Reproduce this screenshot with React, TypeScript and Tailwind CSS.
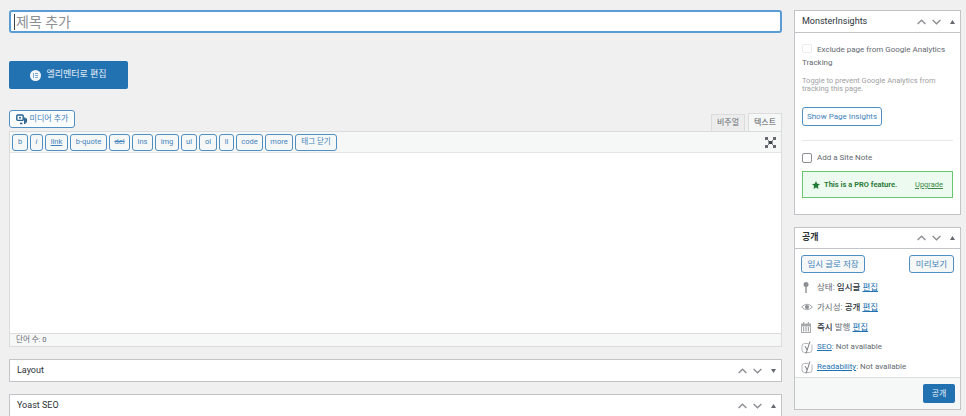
import { ReactNode } from 'react'

const font = "font-['Roboto','Noto_Sans_CJK_KR',sans-serif]"

// widths read off the editor toolbar
const quicktags = [
  { label: 'b', width: 'w-[16px]' },
  { label: 'i', width: 'w-[13px] italic' },
  { label: 'link', width: 'w-[23px] underline' },
  { label: 'b-quote', width: 'w-[37px]' },
  { label: 'del', width: 'w-[21px] line-through' },
  { label: 'ins', width: 'w-[21px]' },
  { label: 'img', width: 'w-[24px]' },
  { label: 'ul', width: 'w-[16px]' },
  { label: 'ol', width: 'w-[18px]' },
  { label: 'li', width: 'w-[15px]' },
  { label: 'code', width: 'w-[27px]' },
  { label: 'more', width: 'w-[28px]' },
  { label: '태그 닫기', width: 'w-[42px]' },
]

function BoxControls({ open = true }: { open?: boolean }) {
  return (
    <div className="flex items-center text-[#8c8f94]">
      <svg width="9" height="6" viewBox="0 0 9 6" fill="none" stroke="currentColor" strokeWidth="1.4">
        <path d="M.6 5 L4.5 1.2 L8.4 5" />
      </svg>
      <svg width="9" height="6" viewBox="0 0 9 6" fill="none" stroke="currentColor" strokeWidth="1.4" className="ml-[6px]">
        <path d="M.6 1 L4.5 4.8 L8.4 1" />
      </svg>
      <svg width="5" height="4" viewBox="0 0 5 4" fill="#646970" className="ml-[9px]">
        <path d={open ? 'M0 4 L2.5 0 L5 4 Z' : 'M0 0 L2.5 4 L5 0 Z'} />
      </svg>
    </div>
  )
}

function OutlineButton({ children, className = '' }: { children: ReactNode; className?: string }) {
  return (
    <div className={`flex items-center justify-center border border-[#4f8fc4] rounded-[3px] text-[#3f83bb] bg-[#f6f7f7] ${className}`}>
      {children}
    </div>
  )
}

function YoastIcon() {
  return (
    <svg width="12" height="13" viewBox="0 0 12 13" fill="none" stroke="#b4b7ba" strokeWidth="1">
      <path d="M7.5 2.5 H3.5 Q1 2.5 1 5 V9 Q1 11.5 3.5 11.5 H8.5 Q11 11.5 11 9 V3.5" />
      <path d="M4 5 L6.2 9 M9 .5 L5 12.5" stroke="#787c82" strokeWidth="1" />
    </svg>
  )
}

function MetaRow({ icon, children, size = 'text-[8.5px]' }: { icon: ReactNode; children: ReactNode; size?: string }) {
  return (
    <div className={`flex items-center h-[20px] text-[#646970] ${size}`}>
      <span className="w-[16px] flex justify-start shrink-0">{icon}</span>
      <span>{children}</span>
    </div>
  )
}

function EditLink({ children = '편집' }: { children?: string }) {
  return <span className="text-[#2271b1] underline">{children}</span>
}

function PostBox({ title }: { title: string }) {
  return (
    <div className="flex items-center justify-between h-[23px] bg-white border border-[#c3c4c7] pl-[7px] pr-[5px]">
      <span className="text-[9px] text-[#2c3338]">{title}</span>
      <BoxControls open={title !== 'Layout'} />
    </div>
  )
}

export default function App() {
  return (
    <div className={`${font} w-[966px] h-[416px] overflow-hidden bg-[#f0f0f1] flex pl-[9px] pt-[10px] gap-[12px]`}>
      {/* Main column */}
      <div className="w-[773px] shrink-0">
        <div className="h-[23px] bg-white border-2 border-[#5b9dd3] rounded-[3px] flex items-center pl-[3px] text-[14px] text-[#8c8f94]">
          <span className="border-l border-[#3c434a] pl-[1px] leading-[16px]">제목 추가</span>
        </div>

        <div className="mt-[28px] w-[119px] h-[28px] bg-[#2271b1] rounded-[2px] flex items-center justify-center gap-[5px] text-[#e8f1f8] text-[9px]">
          <span className="w-[11px] h-[11px] rounded-full bg-[#f4f8fb] flex items-center justify-center">
            <svg width="5" height="5" viewBox="0 0 5 5" fill="#7aa9cf">
              <path d="M0 0 H1 V5 H0 Z M2 0 H5 V1 H2 Z M2 2 H5 V3 H2 Z M2 4 H5 V5 H2 Z" />
            </svg>
          </span>
          엘리멘터로 편집
        </div>

        <div className="mt-[21px] h-[21px] flex items-start justify-between">
          <OutlineButton className="w-[66px] h-[18px] gap-[3px] text-[8px] !bg-[#fbfcfc]">
            <svg width="11" height="11" viewBox="0 0 11 11" fill="none">
              <rect x=".8" y="1" width="6.4" height="5.4" rx="1" stroke="#27618f" strokeWidth="1.4" />
              <circle cx="4" cy="3.7" r="1" fill="#27618f" />
              <path d="M4 9.5 h2.4 M8.8 3.5 v6.5 M10.4 4.5 v4" stroke="#27618f" strokeWidth="1.5" />
            </svg>
            미디어 추가
          </OutlineButton>
          <div className="flex items-end gap-[3px] pt-[3px] h-[21px]">
            <div className="h-[17px] w-[34px] flex items-center justify-center border border-[#dcdcde] border-b-0 bg-[#ececed] text-[8px] text-[#646970]">비주얼</div>
            <div className="h-[18px] w-[34px] flex items-center justify-center border border-[#dcdcde] border-b-0 bg-[#f6f7f7] text-[8px] text-[#50575e]">텍스트</div>
          </div>
        </div>

        <div className="border border-[#dcdcde]">
          <div className="h-[21px] bg-[#f6f7f7] border-b border-[#e5e5e5] flex items-center justify-between pl-[2px] pr-[5px]">
            <div className="flex gap-[2px]">
              {quicktags.map(tag => (
                <OutlineButton key={tag.label} className={`h-[17px] text-[7.5px] ${tag.width}`}>
                  {tag.label}
                </OutlineButton>
              ))}
            </div>
            <svg width="11" height="11" viewBox="0 0 11 11" fill="none">
              <path d="M1.5 1.5 L9.5 9.5 M9.5 1.5 L1.5 9.5" stroke="#787c82" strokeWidth="1" />
              <rect x="3.5" y="4" width="4" height="3" fill="#3c434a" />
              <rect x="0" y="0" width="3" height="3" fill="#646970" />
              <rect x="8" y="0" width="3" height="3" fill="#646970" />
              <rect x="0" y="8" width="3" height="3" fill="#646970" />
              <rect x="8" y="8" width="3" height="3" fill="#646970" />
            </svg>
          </div>
          <div className="h-[180px] bg-white"></div>
          <div className="h-[13px] bg-[#f6f7f7] border-t border-[#dcdcde] flex items-center pl-[6px] text-[7.5px] text-[#646970]">
            단어 수: 0
          </div>
        </div>

        <div className="mt-[12px] flex flex-col gap-[12px]">
          <PostBox title="Layout" />
          <PostBox title="Yoast SEO" />
        </div>
      </div>

      {/* Sidebar */}
      <div className="w-[167px] shrink-0 flex flex-col gap-[12px]">
        <div className="h-[205px] shrink-0 bg-white border border-[#c3c4c7]">
          <div className="h-[22px] border-b border-[#c3c4c7] flex items-center justify-between pl-[7px] pr-[5px]">
            <span className="text-[9px] text-[#2c3338]">MonsterInsights</span>
            <BoxControls />
          </div>
          <div className="px-[7px] pt-[10px]">
            <div className="text-[8px] leading-[13px] text-[#646970]">
              <span className="inline-block w-[10px] h-[9px] mr-[5px] align-[-1px] border border-[#ececec] rounded-[2px] bg-white"></span>
              Exclude page from Google Analytics Tracking
            </div>
            <p className="mt-[8px] w-[135px] text-[7.5px] leading-[8px] text-[#a0a1a3]">
              Toggle to prevent Google Analytics from tracking this page.
            </p>
            <OutlineButton className="mt-[14px] w-[80px] h-[19px] text-[8px] !bg-white">Show Page Insights</OutlineButton>
            <div className="mt-[14px] border-t border-[#e8e8e8]"></div>
            <label className="mt-[10px] h-[13px] flex items-center gap-[5px] text-[8px] text-[#646970]">
              <span className="w-[10px] h-[10px] border border-[#8c8f94] rounded-[2px] bg-white"></span>
              Add a Site Note
            </label>
            <div className="mt-[7px] h-[27px] border border-[#68c66f] bg-[#edfaef] flex items-center justify-between pl-[9px] pr-[9px] text-[7.5px]">
              <span className="flex items-center gap-[4px] font-bold text-[#2f7d3b]">
                <svg width="8" height="8" viewBox="0 0 10 10" fill="#1f7a34">
                  <path d="M5 0 L6.5 3.3 L10 3.8 L7.4 6.2 L8.1 10 L5 8.1 L1.9 10 L2.6 6.2 L0 3.8 L3.5 3.3 Z" />
                </svg>
                This is a PRO feature.
              </span>
              <span className="text-[#3f8a4a] underline">Upgrade</span>
            </div>
          </div>
        </div>

        <div className="h-[183px] shrink-0 bg-white border border-[#c3c4c7] flex flex-col">
          <div className="h-[22px] border-b border-[#c3c4c7] flex items-center justify-between pl-[7px] pr-[5px]">
            <span className="text-[9px] font-bold text-[#2c3338]">공개</span>
            <BoxControls />
          </div>
          <div className="flex-1 px-[6px] pt-[6px]">
            <div className="flex justify-between">
              <OutlineButton className="w-[64px] h-[18px] text-[8.5px]">임시 글로 저장</OutlineButton>
              <OutlineButton className="w-[45px] h-[18px] text-[8.5px]">미리보기</OutlineButton>
            </div>
            <div className="mt-[4px]">
              <MetaRow
                icon={
                  <svg width="6" height="11" viewBox="0 0 6 11" fill="#8c8f94" className="ml-[2px]">
                    <circle cx="3" cy="2.6" r="2.5" />
                    <rect x="2.3" y="4.5" width="1.4" height="6.5" />
                  </svg>
                }
              >
                상태: <b className="font-medium text-[#2c3338]">임시글</b> <EditLink />
              </MetaRow>
              <MetaRow
                icon={
                  <svg width="12" height="8" viewBox="0 0 12 8" fill="none">
                    <path d="M.5 4 Q6 -1.5 11.5 4 Q6 9.5 .5 4 Z" stroke="#a7aaad" />
                    <circle cx="6" cy="4" r="2.1" fill="#8c8f94" />
                  </svg>
                }
              >
                가시성: <b className="font-medium text-[#2c3338]">공개</b> <EditLink />
              </MetaRow>
              <MetaRow
                icon={
                  <svg width="10" height="11" viewBox="0 0 10 11" fill="#a7aaad">
                    <path d="M0 1.5 H10 V11 H0 Z M1 4.5 V10 H9 V4.5 Z" fillRule="evenodd" />
                    <path d="M2 0 H3.2 V2.5 H2 Z M6.8 0 H8 V2.5 H6.8 Z M2 5 H3.2 V9.5 H2 Z M4.4 5 H5.6 V9.5 H4.4 Z M6.8 5 H8 V9.5 H6.8 Z" />
                  </svg>
                }
              >
                <b className="font-medium text-[#2c3338]">즉시</b> 발행 <EditLink />
              </MetaRow>
              <MetaRow icon={<YoastIcon />} size="text-[8px]">
                <EditLink>SEO</EditLink>: Not available
              </MetaRow>
              <MetaRow icon={<YoastIcon />} size="text-[8px]">
                <EditLink>Readability</EditLink>: Not available
              </MetaRow>
            </div>
          </div>
          <div className="h-[33px] border-t border-[#dcdcde] bg-[#f6f7f7] flex items-center justify-end pr-[5px]">
            <div className="w-[32px] h-[19px] bg-[#2271b1] rounded-[2px] flex items-center justify-center text-[#e8f1f8] text-[8px]">공개</div>
          </div>
        </div>
      </div>
    </div>
  )
}
